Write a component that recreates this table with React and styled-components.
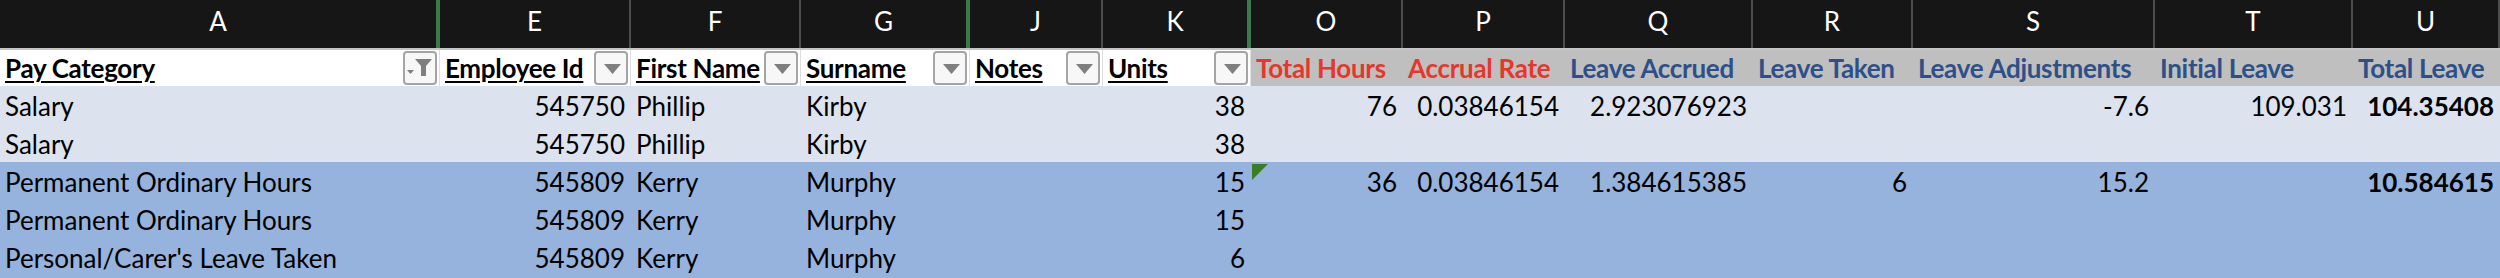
import React from "react";
import styled, { createGlobalStyle } from "styled-components";

const FONT = `Lato, "Open Sans", "Noto Sans", sans-serif`;

const columns = [
  { key: "a", letter: "A", width: 440, title: "Pay Category", edge: "green", filter: "filtered" },
  { key: "e", letter: "E", width: 191, title: "Employee Id", align: "right", filter: "sort" },
  { key: "f", letter: "F", width: 170, title: "First Name", filter: "sort" },
  { key: "g", letter: "G", width: 169, title: "Surname", edge: "green", filter: "sort" },
  { key: "j", letter: "J", width: 133, title: "Notes", filter: "sort" },
  { key: "k", letter: "K", width: 148, title: "Units", align: "right", edge: "green", filter: "sort" },
  { key: "o", letter: "O", width: 152, title: "Total Hours", align: "right", tone: "red" },
  { key: "p", letter: "P", width: 162, title: "Accrual Rate", align: "right", tone: "red" },
  { key: "q", letter: "Q", width: 188, title: "Leave Accrued", align: "right", tone: "blue" },
  { key: "r", letter: "R", width: 160, title: "Leave Taken", align: "right", tone: "blue" },
  { key: "s", letter: "S", width: 242, title: "Leave Adjustments", align: "right", tone: "blue" },
  { key: "t", letter: "T", width: 198, title: "Initial Leave", align: "right", tone: "blue" },
  { key: "u", letter: "U", width: 147, title: "Total Leave", align: "right", tone: "blue", bold: true },
];

const rows = [
  {
    band: "light",
    a: "Salary", e: "545750", f: "Phillip", g: "Kirby", k: "38",
    o: "76", p: "0.03846154", q: "2.923076923", s: "-7.6", t: "109.031", u: "104.35408",
  },
  { band: "light", a: "Salary", e: "545750", f: "Phillip", g: "Kirby", k: "38" },
  {
    band: "dark", flag: "o",
    a: "Permanent Ordinary Hours", e: "545809", f: "Kerry", g: "Murphy", k: "15",
    o: "36", p: "0.03846154", q: "1.384615385", r: "6", s: "15.2", u: "10.584615",
  },
  { band: "dark", a: "Permanent Ordinary Hours", e: "545809", f: "Kerry", g: "Murphy", k: "15" },
  { band: "dark", a: "Personal/Carer's Leave Taken", e: "545809", f: "Kerry", g: "Murphy", k: "6" },
];

const template = columns.map((c) => `${c.width}px`).join(" ");

const GlobalStyle = createGlobalStyle`
  html, body {
    margin: 0;
    height: 278px;
    overflow: hidden;
    background: #95b3dc;
  }
`;

const Sheet = styled.div`
  width: 2500px;
  font-family: ${FONT};
  font-size: 26px;
  color: #000;
`;

const Row = styled.div`
  display: grid;
  grid-template-columns: ${template};
`;

const LetterRow = styled(Row)`
  height: 48px;
  background: #161616;
  border-bottom: 2px solid #c4c4c4;
`;

const Letter = styled.div`
  box-sizing: border-box;
  height: 48px;
  line-height: 42px;
  text-align: center;
  color: #fff;
  border-right: ${(p) => (p.$edge === "green" ? "4px solid #3c7a4a" : "2px solid #4d4d4d")};
`;

const TitleRow = styled(Row)`
  height: 36px;
`;

const TitleCell = styled.div`
  box-sizing: border-box;
  display: flex;
  align-items: center;
  padding: 0 2px 0 5px;
  line-height: 36px;
  font-weight: 700;
  letter-spacing: -0.3px;
  white-space: nowrap;
  overflow: hidden;
  background: ${(p) => (p.$tone ? "#bfbfbf" : "#fff")};
  border-right: ${(p) => (p.$tone ? "none" : "1px solid #dedede")};
  color: ${(p) => (p.$tone === "red" ? "#e6372c" : p.$tone === "blue" ? "#2d5089" : "#000")};
`;

const TitleText = styled.span`
  text-decoration: ${(p) => (p.$tone ? "none" : "underline")};
  text-decoration-thickness: 2px;
  text-underline-offset: 3px;
`;

const FilterButton = styled.span`
  box-sizing: border-box;
  width: 34px;
  height: 34px;
  margin-left: auto;
  flex: none;
  display: flex;
  border: 2px solid #a4a4a4;
  border-radius: 4px;
  background: #f7f7f7;

  svg {
    width: 30px;
    height: 30px;
  }
`;

const DataRow = styled(Row)`
  height: 38px;
  background: ${(p) => (p.$band === "dark" ? "#95b3dc" : "#dce3ef")};
`;

const Cell = styled.div`
  position: relative;
  box-sizing: border-box;
  padding: 2px 6px 0 5px;
  line-height: 36px;
  white-space: nowrap;
  overflow: hidden;
  text-align: ${(p) => (p.$align === "right" ? "right" : "left")};
  font-weight: ${(p) => (p.$bold ? 700 : 400)};
`;

const ErrorFlag = styled.span`
  position: absolute;
  top: 2px;
  left: 1px;
  width: 16px;
  height: 16px;
  background: #3b7d23;
  clip-path: polygon(0 0, 100% 0, 0 100%);
`;

const SortIcon = () => (
  <svg viewBox="0 0 30 30">
    <path d="M8 11 H25 L16.5 21 Z" fill="#7f7f7f" />
  </svg>
);

const FilteredIcon = () => (
  <svg viewBox="0 0 30 30">
    <path d="M2 17 H9 L5.5 21 Z" fill="#7f7f7f" />
    <path d="M10 6 H27 L21 13 V23 H16 V13 Z" fill="#7f7f7f" />
  </svg>
);

export default function App() {
  return (
    <>
      <GlobalStyle />
      <Sheet>
        <LetterRow>
          {columns.map((c) => (
            <Letter key={c.key} $edge={c.edge}>
              {c.letter}
            </Letter>
          ))}
        </LetterRow>
        <TitleRow>
          {columns.map((c) => (
            <TitleCell key={c.key} $tone={c.tone}>
              <TitleText $tone={c.tone}>{c.title}</TitleText>
              {c.filter && (
                <FilterButton>
                  {c.filter === "filtered" ? <FilteredIcon /> : <SortIcon />}
                </FilterButton>
              )}
            </TitleCell>
          ))}
        </TitleRow>
        {rows.map((r, i) => (
          <DataRow key={i} $band={r.band}>
            {columns.map((c) => (
              <Cell key={c.key} $align={c.align} $bold={c.bold}>
                {r.flag === c.key && <ErrorFlag />}
                {r[c.key] || ""}
              </Cell>
            ))}
          </DataRow>
        ))}
      </Sheet>
    </>
  );
}
